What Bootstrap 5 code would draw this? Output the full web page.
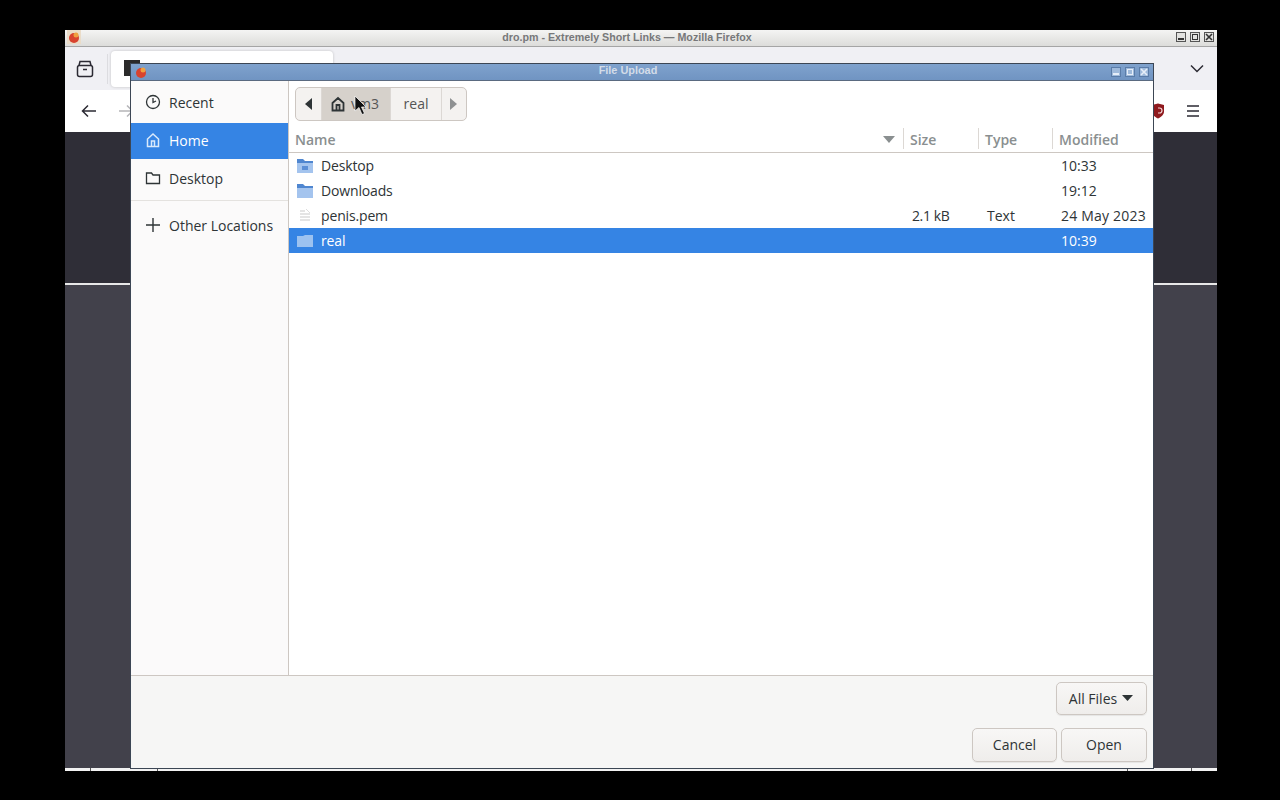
<!DOCTYPE html>
<html lang="en"><head><meta charset="utf-8"><title>File Upload</title>
<link rel="stylesheet" href="https://cdn.jsdelivr.net/npm/bootstrap@5.3.0/dist/css/bootstrap.min.css">
<style>
html,body{height:100%;margin:0}
body{background:#000;font-family:"Open Sans","Noto Sans","Liberation Sans",sans-serif;font-size:14px;color:#2e3436;overflow:hidden}
.desk{position:relative;width:1280px;height:800px;background:#000}
.ffwin{position:absolute;left:65px;top:30px;width:1152px;height:741px;background:#fff}
.fftitle{height:17px;background:linear-gradient(#f4f4f3,#dcdcda);border-bottom:1px solid #a5a5a5;font:bold 10.7px "Liberation Sans",sans-serif;color:#77787a;line-height:14px;padding:0 3px 2px 2px}
.fftitle .ttl{text-align:center;flex-grow:1;padding-right:3px}
.wbtn{width:10px;height:10px;border:1px solid #555;background:#e2e2e0;display:block;position:relative}
.wbtn svg{position:absolute;left:0;top:0}
.wbtns{gap:4px}
.fftabs{height:43px;background:#f0f0f4;padding:4px 13px 0 3px}
.pinned{width:34px;height:36px}
.tabsep{width:1px;height:30px;background:#dcdce0;margin:3px 3px 0 5px}
.fftab{width:222px;height:36px;background:#fff;border-radius:4px;box-shadow:0 0 3px rgba(0,0,0,.2);padding:9px 12px 9px 13px}
.favicon{width:16px;height:16px;background:#2b2a2a;display:block}
.ffnav{height:42px;background:#fff;padding:0 16px 0 16px}
.navleft{gap:21px}
.navright{gap:20px}
.ffdark{height:153px;background:#2f2e37;border-bottom:2px solid #e8e8e8}
.ffrest{height:483px;background:#42414b}
.ffstrip{height:3px;background:linear-gradient(#555,#555) 25px 0/1px 3px no-repeat,linear-gradient(#555,#555) 92px 0/1px 3px no-repeat,linear-gradient(#555,#555) 1062px 0/1px 3px no-repeat,linear-gradient(#555,#555) 1126px 0/1px 3px no-repeat,#f2f2f2}
.dlg{position:absolute;left:131px;top:64px;width:1022px;height:704px;background:#f6f6f5;display:flex;flex-direction:column;box-shadow:0 0 0 1px #3c4654}
.dlgtitle{height:17px;flex:none;background:linear-gradient(#7fa2cd,#7094c2);border-bottom:1px solid #5a6a80;font:bold 10.9px "Liberation Sans",sans-serif;color:#d3dce8;line-height:13px;padding:0 4px 0 3px}
.dlgtitle .ttl{text-align:center;flex-grow:1;padding:0 3px 4px 0}
.dbtn{width:10px;height:10px;background:#9fbadb;border:1px solid #5a7ca8;display:block;position:relative}
.dbtn svg{position:absolute;left:0;top:0}
.dbtns{gap:4px}
.dlgmain{flex:1 1 auto;display:flex;min-height:0;background:#fff}
.side{width:158px;flex:none;background:#fbfafa;border-right:1px solid #cdc7c2;padding-top:3px}
.sideitem{height:36px;display:flex;align-items:center;padding-left:14px;gap:8px;color:#2e3436;margin-bottom:2px}
.sideitem.first{margin-bottom:3px}
.sideitem.cur{background:#3584e4;color:#fff;padding-bottom:2px;margin-bottom:1px}
.sidesep{border-top:1px solid #e4e2df;margin:4px 0 0;height:7px}
.side svg{flex:none}
.pane{flex:1 1 auto;min-width:0;display:flex;flex-direction:column}
.pathwrap{height:46px;flex:none;padding:6px 0 0 6px;background:#fff}
.pathbar{display:inline-flex;height:34px;border:1px solid #cdc7c2;border-radius:5px;background:#f4f2f0;overflow:hidden;color:#555}
.pseg{display:flex;align-items:center;justify-content:center;border-right:1px solid #dcd8d4;padding-bottom:1px}
.pseg:last-child{border-right:0}
.parr{width:26px;padding-left:1px}
.parr:last-child{width:24px;padding-left:0}
.phome{width:69px;background:#d6d1cb;gap:5px;padding-right:3px}
.preal{width:51px}
.lhead{height:26px;flex:none;display:flex;background:#fff;border-bottom:1px solid #cdc7c2;color:#8a8f90;font-weight:600}
.lhead>div{display:flex;align-items:center;padding-left:6px}
.lhead .cname{padding-left:6px;padding-right:8px;justify-content:space-between}
.lhead .csize,.lhead .ctype,.lhead .cmod{border-left:1px solid #dcd8d4;margin:1px 0 3px;padding-top:2px}
.cname{width:614px}.csize{width:75px}.ctype{width:74px}.cmod{flex:1 1 auto}
.frow{height:25px;display:flex;align-items:center;color:#2e3436}
.frow .cname{display:flex;align-items:center;gap:8px;padding-left:8px;letter-spacing:-.15px}
.frow .csize{padding-left:9px;width:75px;letter-spacing:-.4px}.frow .ctype{padding-left:9px}.frow .cmod{padding-left:9px}
.frow .cmod .wide{letter-spacing:.2px}
.frow.cur{background:#3584e4;color:#fff}
.lbody{flex:1 1 auto;background:#fff}
.foot{height:93px;flex:none;background:#f6f6f5;border-top:1px solid #cdc7c2;padding:6px 6px 0 0;display:flex;flex-direction:column;align-items:flex-end;gap:13px}
.gbtn{height:34px;border:1px solid #cdc7c2;border-radius:5px;background:linear-gradient(#f8f7f6,#efedeb);box-shadow:0 1px 1px rgba(0,0,0,.07);color:#2e3436;display:flex;align-items:center;justify-content:center;font-size:14px;padding:0 0 1px}
.bfiles{width:91px;height:33px;gap:5px;padding-bottom:1px;padding-right:1px}.bcancel{width:85px}.bopen{width:86px}
.cursor{position:absolute;left:354px;top:95px}
</style></head><body>
<div class="desk">
 <div class="ffwin">
  <div class="fftitle d-flex align-items-center">
   <svg width="14" height="14" viewBox="0 0 14 14"><rect width="14" height="14" fill="#eadcc8"/><circle cx="7" cy="8" r="5" fill="#d8432f"/><circle cx="9" cy="5" r="2.5" fill="#f0a040"/></svg>
   <span class="ttl">dro.pm - Extremely Short Links — Mozilla Firefox</span>
   <span class="d-flex wbtns">
    <span class="wbtn"><svg width="8" height="8"><rect x="1" y="5" width="6" height="2" fill="#333"/></svg></span>
    <span class="wbtn"><svg width="8" height="8"><rect x="1.5" y="1.5" width="5" height="5" fill="none" stroke="#333"/></svg></span>
    <span class="wbtn"><svg width="8" height="8"><path d="M1 1l6 6M7 1l-6 6" stroke="#333" stroke-width="1.6"/></svg></span>
   </span>
  </div>
  <div class="fftabs d-flex justify-content-between">
   <div class="d-flex">
    <div class="pinned d-flex align-items-center justify-content-center">
     <svg width="18" height="18" viewBox="0 0 18 18" fill="none" stroke="#2b2a33" stroke-width="1.5"><rect x="1.500" y="5.500" width="15" height="11" rx="2"/><path d="M3 5.500l1-4h10l1 4M7 9.500h4"/></svg>
    </div>
    <span class="tabsep"></span>
    <div class="fftab"><span class="favicon"></span></div>
   </div>
   <div class="d-flex align-items-center pb-1">
    <svg width="14" height="9" viewBox="0 0 14 9" fill="none" stroke="#2b2a33" stroke-width="1.5"><path d="M1 1.500l6 6 6-6"/></svg>
   </div>
  </div>
  <div class="ffnav d-flex align-items-center justify-content-between">
   <div class="d-flex align-items-center navleft">
    <svg width="16" height="14" viewBox="0 0 16 14" fill="none" stroke="#2b2a33" stroke-width="1.5"><path d="M15 7H2M7 1.500L1.500 7 7 12.500"/></svg>
    <svg width="16" height="14" viewBox="0 0 16 14" fill="none" stroke="#b5b5b8" stroke-width="1.5"><path d="M1 7h13M9 1.500L14.500 7 9 12.500"/></svg>
   </div>
   <div class="d-flex align-items-center navright">
    <svg width="14" height="16" viewBox="0 0 14 16"><path d="M1 2l6-1.500L13 2v6.500c0 3.500-3 5.500-6 7C4 14 1 12 1 8.500z" fill="#8f1a1e"/><path d="M7 5h1.500a2.500 2.500 0 0 1 0 5H7" fill="none" stroke="#f3d5d5" stroke-width="1.200"/></svg>
    <svg width="16" height="12" viewBox="0 0 16 12" stroke="#2b2a33" stroke-width="1.5"><path d="M2 1h12M2 6h12M2 11h12"/></svg>
   </div>
  </div>
  <div class="ffdark"></div>
  <div class="ffrest"></div>
  <div class="ffstrip"></div>
 </div>

 <div class="dlg">
  <div class="dlgtitle d-flex align-items-center">
   <svg width="14" height="14" viewBox="0 0 14 14" class="flex-none"><circle cx="7" cy="8" r="5" fill="#d8432f"/><circle cx="9" cy="5" r="2.500" fill="#f0a040"/></svg>
   <span class="ttl">File Upload</span>
   <span class="d-flex dbtns">
    <span class="dbtn"><svg width="8" height="8"><rect x="1" y="5" width="6" height="2" fill="#e6eef8"/></svg></span>
    <span class="dbtn"><svg width="8" height="8"><rect x="1.500" y="1.500" width="5" height="5" fill="none" stroke="#e6eef8"/></svg></span>
    <span class="dbtn"><svg width="8" height="8"><path d="M1 1l6 6M7 1l-6 6" stroke="#e6eef8" stroke-width="1.600"/></svg></span>
   </span>
  </div>
  <div class="dlgmain">
   <div class="side">
    <div class="sideitem first">
     <svg width="16" height="16" viewBox="0 0 16 16" fill="none" stroke="#2e3436" stroke-width="1.300"><circle cx="8" cy="8" r="6.500"/><path d="M8 4v4.500l3-1.500"/></svg>Recent</div>
    <div class="sideitem cur">
     <svg width="16" height="16" viewBox="0 0 16 16" fill="none" stroke="#d9e9fb" stroke-width="1.500"><path d="M2.500 14.500V7L8 2l5.500 5v7.500zM6.500 14.500V9h3v5.500"/></svg>Home</div>
    <div class="sideitem">
     <svg width="16" height="16" viewBox="0 0 16 16" fill="none" stroke="#2e3436" stroke-width="1.300"><path d="M1.500 13.500V3h5l1.500 2h6.500v8.500z"/></svg>Desktop</div>
    <div class="sidesep"></div>
    <div class="sideitem">
     <svg width="16" height="16" viewBox="0 0 16 16" stroke="#2e3436" stroke-width="1.400"><path d="M8 1v14M1 8h14"/></svg>Other Locations</div>
   </div>
   <div class="pane">
    <div class="pathwrap">
     <div class="pathbar">
      <div class="pseg parr"><svg width="8" height="12" viewBox="0 0 8 12"><path d="M7 0v12L0 6z" fill="#2e3436"/></svg></div>
      <div class="pseg phome"><svg width="16" height="16" viewBox="0 0 16 16" fill="none" stroke="#2e3436" stroke-width="1.800"><path d="M2.500 14.500V7L8 2l5.500 5v7.500zM6.500 14.500V9h3v5.500"/></svg><span>vm3</span></div>
      <div class="pseg preal">real</div>
      <div class="pseg parr"><svg width="8" height="12" viewBox="0 0 8 12"><path d="M0 0v12l7-6z" fill="#8f9192"/></svg></div>
     </div>
    </div>
    <div class="lhead">
     <div class="cname"><span>Name</span><svg width="12" height="7" viewBox="0 0 12 7"><path d="M0 0h12L6 7z" fill="#8a8f90"/></svg></div>
     <div class="csize">Size</div><div class="ctype">Type</div><div class="cmod">Modified</div>
    </div>
    <div class="frow"><div class="cname"><svg width="16" height="16" viewBox="0 0 16 16"><path d="M0 1h6l2 2h8v12H0z" fill="#4f86d0"/><rect y="5" width="16" height="10" fill="#a4c4ee"/><path d="M5 8h6v4H5z" fill="#5c8fd6"/></svg>Desktop</div><div class="csize"></div><div class="ctype"></div><div class="cmod">10:33</div></div>
    <div class="frow"><div class="cname"><svg width="16" height="16" viewBox="0 0 16 16"><path d="M0 1h6l2 2h8v12H0z" fill="#4f86d0"/><rect y="5" width="16" height="10" fill="#a4c4ee"/></svg>Downloads</div><div class="csize"></div><div class="ctype"></div><div class="cmod">19:12</div></div>
    <div class="frow"><div class="cname"><svg width="16" height="16" viewBox="0 0 16 16" stroke="#c9c9c9"><path d="M3 3h5M3 6h10M3 9h10M3 12h10"/><path d="M9 1l4 4" stroke="#ddd"/></svg>penis.pem</div><div class="csize">2.1 kB</div><div class="ctype">Text</div><div class="cmod"><span class="wide">24 May 2023</span></div></div>
    <div class="frow cur"><div class="cname"><svg width="16" height="16" viewBox="0 0 16 16"><path d="M0 3h6l2-1h8v12H0z" fill="#9cc2f0"/></svg>real</div><div class="csize"></div><div class="ctype"></div><div class="cmod">10:39</div></div>
    <div class="lbody"></div>
   </div>
  </div>
  <div class="foot">
   <button type="button" class="btn gbtn bfiles">All Files <svg width="11" height="6" viewBox="0 0 11 6"><path d="M0 0h11L5.500 6z" fill="#2e3436"/></svg></button>
   <div class="d-flex">
    <button type="button" class="btn gbtn bcancel me-1">Cancel</button>
    <button type="button" class="btn gbtn bopen">Open</button>
   </div>
  </div>
 </div>
 <svg class="cursor" width="14" height="22" viewBox="0 0 14 22"><path d="M1 1v15l4-3.500 3 7 2.500-1-3-6.500H12z" fill="#111" stroke="#fff" stroke-width=".7"/></svg>
</div>
<script src="https://cdn.jsdelivr.net/npm/bootstrap@5.3.0/dist/js/bootstrap.bundle.min.js"></script>
</body></html>
